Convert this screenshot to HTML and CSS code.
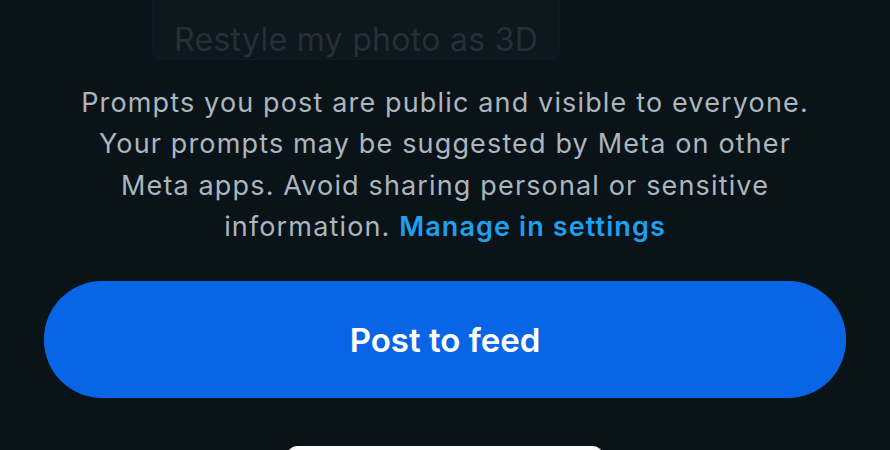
FILE: index.html
```html
<!DOCTYPE html>
<html lang="en">
<head>
  <meta charset="UTF-8">
  <meta name="viewport" content="width=device-width, initial-scale=1.0">
  <title>Post prompt</title>
  <link rel="stylesheet" href="styles.css">
</head>
<body>
  <div class="sheet">
    <!-- Suggested prompt chip (faded) -->
    <div class="chip-row">
      <div class="chip">Restyle my photo as 3D</div>
    </div>

    <!-- Disclaimer -->
    <p class="notice">
      Prompts you post are public and visible to everyone.<br>
      Your prompts may be suggested by Meta on other<br>
      Meta apps. Avoid sharing personal or sensitive<br>
      information. <a href="#" class="link">Manage in settings</a>
    </p>

    <!-- Primary action -->
    <div class="actions">
      <button class="post-btn">Post to feed</button>
    </div>

    <!-- Secondary action peeking in -->
    <div class="secondary-row">
      <div class="secondary-btn"></div>
    </div>
  </div>
</body>
</html>
```

FILE: styles.css
```css
/* General Styling */
html, body {
  margin: 0;
  height: 100%;
}

body {
  background-color: #0a1318;
  font-family: 'Inter', 'Roboto', sans-serif;
  overflow: hidden;
}

.sheet {
  width: 890px;
  height: 450px;
  display: flex;
  flex-direction: column;
  align-items: center;
  overflow: hidden;
}

/* Chip */
.chip-row {
  width: 100%;
  display: flex;
  padding-left: 152px;
  box-sizing: border-box;
}

.chip {
  width: 408px;
  height: 60px;
  box-sizing: border-box;
  padding: 22px 0 0 21px;
  background-color: #0d171c;
  border: 1px solid #111b21;
  border-top: none;
  border-radius: 0 0 8px 8px;
  color: #262f35;
  font-size: 32px;
  line-height: 36px;
  letter-spacing: 0.3px;
  white-space: nowrap;
}

/* Notice text */
.notice {
  margin: 22px 0 0;
  width: 820px;
  text-align: center;
  color: #abb6be;
  font-size: 27px;
  line-height: 41.3px;
  letter-spacing: 1.15px;
}

.link {
  color: #1f9ff0;
  font-weight: 600;
  letter-spacing: 1.1px;
  text-decoration: none;
}

/* Button */
.actions {
  margin-top: 34px;
  width: 100%;
  display: flex;
  justify-content: center;
  flex-shrink: 0;
}

.post-btn {
  width: 802px;
  height: 117px;
  border: none;
  border-radius: 58px;
  background-color: #0866e6;
  color: #ffffff;
  font-family: inherit;
  font-size: 33px;
  font-weight: 600;
  cursor: pointer;
}

.secondary-row {
  margin-top: 48px;
  width: 100%;
  display: flex;
  padding-left: 287px;
  box-sizing: border-box;
  flex-shrink: 0;
}

.secondary-btn {
  width: 316px;
  height: 40px;
  background: #ffffff;
  border-radius: 10px 10px 0 0;
}
```
